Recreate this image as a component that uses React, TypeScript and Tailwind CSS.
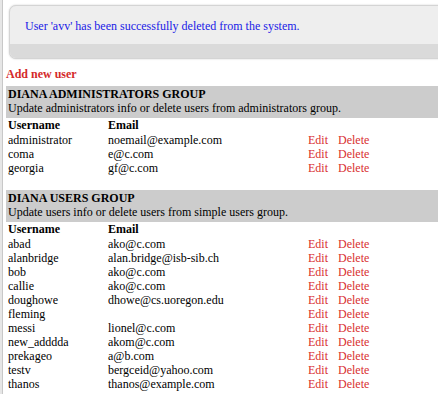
import React from "react";

type User = { username: string; email: string };

const ADMINS: User[] = [
  { username: "administrator", email: "noemail@example.com" },
  { username: "coma", email: "e@c.com" },
  { username: "georgia", email: "gf@c.com" },
];

const USERS: User[] = [
  { username: "abad", email: "ako@c.com" },
  { username: "alanbridge", email: "alan.bridge@isb-sib.ch" },
  { username: "bob", email: "ako@c.com" },
  { username: "callie", email: "ako@c.com" },
  { username: "doughowe", email: "dhowe@cs.uoregon.edu" },
  { username: "fleming", email: "" },
  { username: "messi", email: "lionel@c.com" },
  { username: "new_adddda", email: "akom@c.com" },
  { username: "prekageo", email: "a@b.com" },
  { username: "testv", email: "bergceid@yahoo.com" },
  { username: "thanos", email: "thanos@example.com" },
];

const GroupSection = ({ title, desc, users }: { title: string; desc: string; users: User[] }) => (
  <div>
    <div className="bg-[#cccccc] pl-[2px] pt-[2px] pb-[3px]">
      <div className="text-[12px] leading-[13px] font-bold text-black">{title}</div>
      <div className="text-[12px] leading-[14px] text-black">{desc}</div>
    </div>
    <div className="pl-[2px]">
      <div className="flex text-[12px] leading-[15px] font-bold">
        <div className="w-[100px]">Username</div>
        <div>Email</div>
      </div>
      {users.map((u) => (
        <div key={u.username} className="flex text-[12px] leading-[14px]">
          <div className="w-[100px]">{u.username}</div>
          <div className="w-[200px]">{u.email}</div>
          <div className="w-[30px] text-[#d93030]">Edit</div>
          <div className="text-[#d93030]">Delete</div>
        </div>
      ))}
    </div>
  </div>
);

export default function App() {
  return (
    <div
      className="flex w-[438px] h-[394px] overflow-hidden bg-white text-black"
      style={{ fontFamily: '"Liberation Serif", "Times New Roman", serif' }}
    >
      {/* left frame strip */}
      <div className="w-[3px] shrink-0 bg-[#e6e6e6] border-r border-[#c8c8c8]" />

      <div className="flex-1 min-w-0 pl-[3px]">
        {/* status message */}
        <div className="ml-[3px] mt-[5px] -mr-[20px] rounded-[7px] border border-[#d4d4d4] bg-[#eeeeee] overflow-hidden shadow-[0_0_2px_#cccccc]">
          <div className="h-[38px] pl-[15px] pt-[13px] text-[12px] leading-[14px] text-[#1a1ae6]">
            User 'avv' has been successfully deleted from the system.
          </div>
          <div className="h-[14px] bg-[#dadada]" />
        </div>

        <div className="mt-[8px] text-[12px] leading-[15px] font-bold text-[#d42a2a]">Add new user</div>

        <div className="mt-[4px]">
          <GroupSection
            title="DIANA ADMINISTRATORS GROUP"
            desc="Update administrators info or delete users from administrators group."
            users={ADMINS}
          />
        </div>

        <div className="mt-[15px]">
          <GroupSection
            title="DIANA USERS GROUP"
            desc="Update users info or delete users from simple users group."
            users={USERS}
          />
        </div>
      </div>
    </div>
  );
}
